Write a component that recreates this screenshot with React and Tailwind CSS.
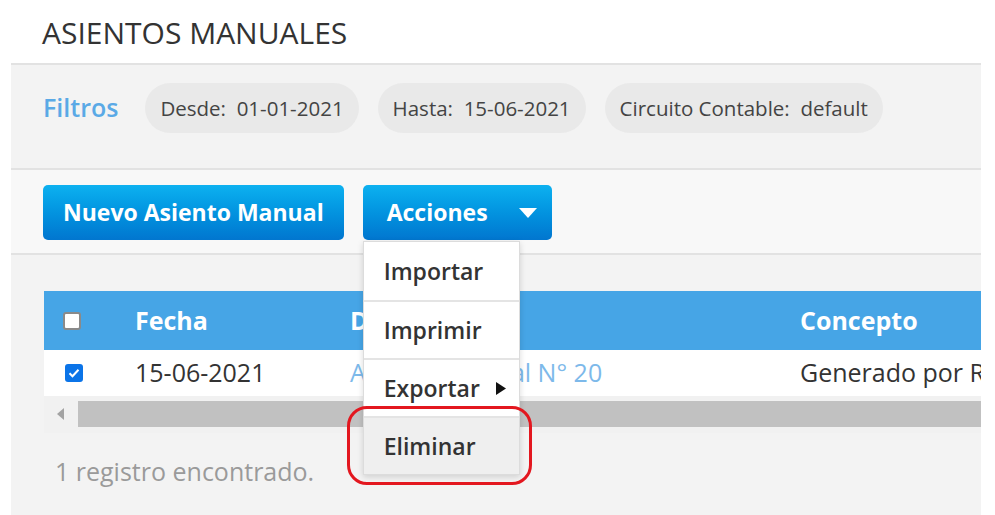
import React from 'react';

const filtros = [
  { label: 'Desde:', value: '01-01-2021' },
  { label: 'Hasta:', value: '15-06-2021' },
  { label: 'Circuito Contable:', value: 'default' },
];

const acciones = ['Importar', 'Imprimir', 'Exportar', 'Eliminar'];

function Chip({ label, value }) {
  return (
    <div className="h-[50px] px-[15px] rounded-full bg-[#e9e9e9] flex items-center text-[20.5px] text-[#444] whitespace-pre">
      {label}  {value}
    </div>
  );
}

function AccionesMenu() {
  return (
    <div className="absolute left-0 top-[56px] w-[157px] bg-white border border-[#dcdcdc] shadow-[0_2px_6px_rgba(0,0,0,0.15)] z-10">
      {acciones.map((a, i) => (
        <div
          key={a}
          className={`h-[58px] flex items-center pl-[20px] text-[23px] font-semibold text-[#333] ${i > 0 ? 'border-t-2 border-[#e4e4e4]' : ''} ${a === 'Eliminar' ? 'bg-[#efefef]' : ''}`}
        >
          {a}
          {a === 'Exportar' && (
            <svg className="ml-[16px]" width="10" height="13" viewBox="0 0 10 13">
              <path d="M0 0l10 6.5L0 13z" fill="#111" />
            </svg>
          )}
        </div>
      ))}
      {/* marca roja alrededor de Eliminar */}
      <div className="absolute left-[-17px] top-[164px] w-[185px] h-[79px] border-[3px] border-[#e3171f] rounded-[20px] pointer-events-none" />
    </div>
  );
}

export default function App() {
  return (
    <div className="w-[995px] h-[515px] bg-white overflow-hidden font-['Open_Sans',sans-serif]">
      <h1 className="h-[63px] pl-[42px] pt-[15px] text-[30px] leading-[36px] font-normal text-[#333]">
        ASIENTOS MANUALES
      </h1>

      <div className="ml-[11px] w-[970px] h-[452px] bg-[#f3f3f3] border-t-2 border-[#e2e2e2]">
        <div className="h-[103px] pt-[18px] pl-[32px] flex items-start gap-[19px]">
          <div className="h-[50px] flex items-center text-[25px] font-semibold text-[#5aa9e6] mr-[8px]">
            Filtros
          </div>
          {filtros.map((f) => (
            <Chip key={f.label} {...f} />
          ))}
        </div>

        <div className="h-[87px] bg-[#f8f8f8] border-t-2 border-b-2 border-[#e2e2e2] pt-[15px] pl-[32px] flex items-start gap-[19px]">
          <button className="h-[55px] px-[20px] rounded-[5px] bg-gradient-to-b from-[#0db1f0] to-[#0276cf] text-white text-[23px] font-bold">
            Nuevo Asiento Manual
          </button>
          <div className="relative">
            <button className="h-[55px] w-[189px] pl-[24px] pr-[14px] rounded-[5px] bg-gradient-to-b from-[#0db1f0] to-[#0276cf] text-white text-[23px] font-bold flex items-center justify-between">
              Acciones
              <svg width="20" height="12" viewBox="0 0 20 12">
                <path d="M1 1h18L10 11z" fill="white" />
              </svg>
            </button>
            <AccionesMenu />
          </div>
        </div>

        <div className="pt-[36px] pl-[33px] overflow-hidden">
          <div className="w-[937px]">
            <div className="h-[59px] bg-[#46a5e6] flex items-center text-white text-[25px] font-bold whitespace-nowrap overflow-hidden">
              <div className="w-[91px] shrink-0 pl-[19px] flex items-center">
                <span className="w-[18px] h-[18px] bg-white rounded-[3px] border-2 border-[#8a8a8a]" />
              </div>
              <div className="w-[215px] shrink-0">Fecha</div>
              <div className="w-[450px] shrink-0">Descripción</div>
              <div className="shrink-0">Concepto</div>
            </div>
            <div className="h-[46px] bg-white flex items-center text-[25px] text-[#333] whitespace-nowrap overflow-hidden">
              <div className="w-[91px] shrink-0 pl-[21px] flex items-center">
                <span className="w-[18px] h-[18px] bg-[#0b74e8] rounded-[3px] flex items-center justify-center">
                  <svg width="12" height="10" viewBox="0 0 12 10">
                    <path d="M1.5 5.2l3 3 6-6.5" stroke="white" strokeWidth="2" fill="none" />
                  </svg>
                </span>
              </div>
              <div className="w-[215px] shrink-0">15-06-2021</div>
              <div className="w-[450px] shrink-0 text-[#7db9ea]">Asiento Manual N° 20</div>
              <div className="shrink-0">Generado por Registración</div>
            </div>
            <div className="h-[37px] bg-[#f1f1f1] flex items-start pt-[5px]">
              <div className="w-[34px] h-[26px] flex items-center justify-center">
                <svg width="8" height="12" viewBox="0 0 8 12">
                  <path d="M7 0v12L0 6z" fill="#a3a3a3" />
                </svg>
              </div>
              <div className="flex-1 h-[26px] bg-[#c1c1c1]" />
            </div>
          </div>
        </div>

        <div className="pl-[44px] pt-[20px] text-[25px] text-[#9a9a9a]">1 registro encontrado.</div>
      </div>
    </div>
  );
}
